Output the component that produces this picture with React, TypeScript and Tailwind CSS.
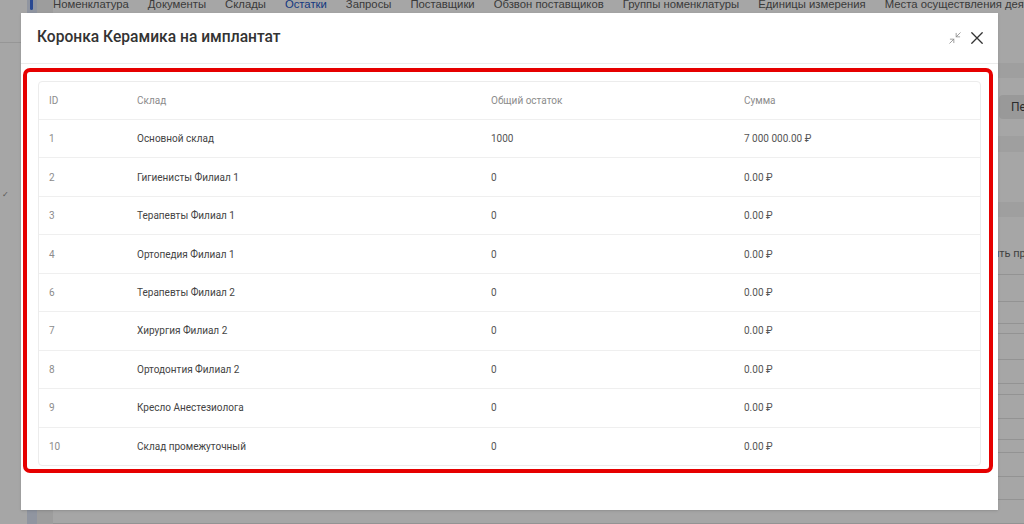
import React from "react";
import { Minimize2 } from "lucide-react";

const rows: [string, string, string, string][] = [
  ["1", "Основной склад", "1000", "7 000 000.00 ₽"],
  ["2", "Гигиенисты Филиал 1", "0", "0.00 ₽"],
  ["3", "Терапевты Филиал 1", "0", "0.00 ₽"],
  ["4", "Ортопедия Филиал 1", "0", "0.00 ₽"],
  ["6", "Терапевты Филиал 2", "0", "0.00 ₽"],
  ["7", "Хирургия Филиал 2", "0", "0.00 ₽"],
  ["8", "Ортодонтия Филиал 2", "0", "0.00 ₽"],
  ["9", "Кресло Анестезиолога", "0", "0.00 ₽"],
  ["10", "Склад промежуточный", "0", "0.00 ₽"],
];

const tabs = [
  "Номенклатура",
  "Документы",
  "Склады",
  "Остатки",
  "Запросы",
  "Поставщики",
  "Обзвон поставщиков",
  "Группы номенклатуры",
  "Единицы измерения",
  "Места осуществления деятельности",
];

const bgRows = [11, 27, 22, 10, 26, 24, 11, 24, 21, 13, 24, 23, 24];

export default function App() {
  return (
    <div className="relative h-[524px] w-[1024px] overflow-hidden bg-white font-['Roboto',sans-serif]">
      {/* Background page */}
      <div className="flex h-full">
        <aside className="flex w-[27px] shrink-0 flex-col">
          <div className="h-[43px] border-b border-[#e6e6e6]" />
          <div className="mt-[148px] pl-[2px] text-[8px] leading-none text-[#888]">✓</div>
        </aside>
        <div className="flex w-[10px] shrink-0 flex-col bg-[#dde5f6]">
          <div className="ml-[3px] h-[10px] w-[3px] rounded-b bg-[#3f6fe0]" />
        </div>
        <div className="w-[16px] shrink-0 bg-[#f1f1f1]" />
        <main className="flex min-w-0 flex-1 flex-col">
          <nav className="-mt-[5px] flex h-[20px] items-center gap-[19px] whitespace-nowrap font-['Liberation_Sans',sans-serif] text-[11.3px] text-[#5a5a5a]">
            {tabs.map((t) => (
              <span key={t} className={t === "Остатки" ? "text-[#2457c5]" : ""}>
                {t}
              </span>
            ))}
          </nav>
          <div className="mt-[49px] h-[16px] bg-[#f4f4f4]" />
          <div className="mt-[17px] flex h-[26px]">
            <div className="w-[946px] shrink-0" />
            <div className="flex shrink-0 items-center whitespace-nowrap rounded bg-[#ececec] pl-[12px] pr-4 text-[12px] text-[#444]">
              Переместить
            </div>
          </div>
          <div className="mt-[17px] h-[17px] bg-[#f4f4f4]" />
          <div className="mt-[50px] h-[16px] bg-[#f4f4f4]" />
          <div className="mt-[28px] flex h-[20px] items-center">
            <div className="w-[907px] shrink-0" />
            <div className="shrink-0 whitespace-nowrap text-[11px] text-[#666]">Добавить приход</div>
          </div>
          <div className="flex flex-col">
            {bgRows.map((h, i) => (
              <div key={i} style={{ height: h }} className="border-b border-[#e2e2e2]" />
            ))}
          </div>
        </main>
      </div>

      {/* Overlay */}
      <div className="absolute inset-0 bg-black/35" />

      {/* Modal */}
      <div className="absolute left-[21px] top-[13px] flex h-[497px] w-[977px] flex-col bg-white shadow-sm">
        <header className="flex h-[51px] shrink-0 items-center justify-between border-b border-[#ececec] pl-4 pr-[15px]">
          <h2 className="text-[15.6px] font-medium text-[#333]">Коронка Керамика на имплантат</h2>
          <div className="flex items-center gap-[9px]">
            <Minimize2 size={14} strokeWidth={1.4} className="text-[#8a8a8a]" />
            <svg width="12" height="12" viewBox="0 0 12 12" className="text-[#333]">
              <path d="M0.8 0.8 L11.2 11.2 M11.2 0.8 L0.8 11.2" stroke="currentColor" strokeWidth="1.3" strokeLinecap="round" />
            </svg>
          </div>
        </header>

        <div className="ml-[2px] mr-[5px] mt-[4px] h-[405px] rounded-[7px] border-[4px] border-[#e60000] pl-[11px] pr-[8px] pt-[9px]">
          <div className="overflow-hidden rounded-[4px] border border-[#ececec] text-[10px]">
            <div className="grid h-[37px] grid-cols-[88px_354px_253px_1fr] items-center text-[#8c8c8c]">
              <div className="pl-[10px]">ID</div>
              <div className="pl-[10px]">Склад</div>
              <div className="pl-[10px]">Общий остаток</div>
              <div className="pl-[10px]">Сумма</div>
            </div>
            {rows.map((r) => (
              <div
                key={r[0]}
                className="grid h-[38.45px] grid-cols-[88px_354px_253px_1fr] items-center border-t border-[#efefef]"
              >
                <div className="pl-[10px] text-[#8c8c8c]">{r[0]}</div>
                <div className="pl-[10px] text-[#444]">{r[1]}</div>
                <div className="pl-[10px] text-[#555]">{r[2]}</div>
                <div className="pl-[10px] text-[#555]">{r[3]}</div>
              </div>
            ))}
          </div>
        </div>
      </div>
    </div>
  );
}
